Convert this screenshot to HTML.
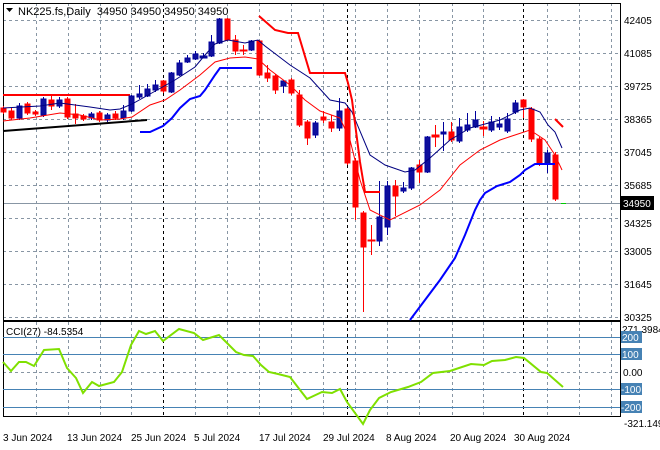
<!DOCTYPE html>
<html><head><meta charset="utf-8"><style>
html,body{margin:0;padding:0;background:#fff;width:660px;height:450px;overflow:hidden}
svg{display:block}
text{font-family:"Liberation Sans",sans-serif;font-size:10px;fill:#000}
</style></head><body>
<svg width="660" height="450" viewBox="0 0 660 450" xmlns="http://www.w3.org/2000/svg">
<rect width="660" height="450" fill="#fff"/>
<!-- grid main -->
<g stroke="#8896a4" stroke-width="1" stroke-dasharray="3,3" fill="none">
<path d="M3 20.5H620M3 53.5H620M3 86.5H620M3 119.5H620M3 152.5H620M3 185.5H620M3 218.5H620M3 251.5H620M3 284.5H620M3 317.5H620"/>
<path d="M36.5 3V320M68.5 3V320M100.5 3V320M131.5 3V320M195.5 3V320M227.5 3V320M259.5 3V320M291.5 3V320M323.5 3V320M355.5 3V320M387.5 3V320M419.5 3V320M452.5 3V320M483.5 3V320M547.5 3V320M579.5 3V320M611.5 3V320"/>
<path d="M36.5 322V416M68.5 322V416M100.5 322V416M131.5 322V416M195.5 322V416M227.5 322V416M259.5 322V416M291.5 322V416M323.5 322V416M355.5 322V416M387.5 322V416M419.5 322V416M452.5 322V416M483.5 322V416M547.5 322V416M579.5 322V416M611.5 322V416"/>
<path d="M3 372.5H620"/>
</g>
<g stroke="#000" stroke-width="1" stroke-dasharray="3,3">
<path d="M163.5 3V320M347.5 3V320M523.5 3V320M163.5 322V416M347.5 322V416M523.5 322V416"/>
</g>
<line x1="3" y1="203.5" x2="620" y2="203.5" stroke="#8896a4"/>
<!-- frames -->
<rect x="3.5" y="3.5" width="617" height="317" fill="none" stroke="#000"/>
<rect x="3.5" y="321.5" width="617" height="95" fill="none" stroke="#000"/>
<!-- left red level & trendline -->
<line x1="3" y1="95" x2="130" y2="95" stroke="#f00" stroke-width="2"/>
<line x1="3" y1="131" x2="147" y2="120" stroke="#000" stroke-width="2"/>
<!-- candles -->
<g stroke-width="1">
<g stroke="#f00" fill="#f00">
<path d="M3.5 106V114M11.5 108V120M27.5 102V115M35.5 110V116M51.5 96V110M67.5 97V119M75.5 104V124M83.5 114V121M99.5 111V122M115.5 111V120M163.5 80V93M227.5 18V41M235.5 35V55M243.5 45V55M259.5 40V76M267.5 65V82M275.5 74V94M291.5 78V95M299.5 90V127M307.5 120V145M323.5 111V123M331.5 115V132M347.5 107V165M355.5 158V220M363.5 211V312M371.5 225V255M395.5 180V216M419.5 160V183M435.5 125V147M451.5 122V142M483.5 121V136M523.5 99V118M531.5 107V142M539.5 137V166M555.5 152V201"/>
<rect x="1" y="108" width="5" height="4"/><rect x="9" y="111" width="5" height="7"/><rect x="25" y="104" width="5" height="9"/><rect x="33" y="112" width="5" height="2"/><rect x="49" y="100" width="5" height="6"/><rect x="65" y="99" width="5" height="18"/><rect x="73" y="114" width="5" height="4"/><rect x="81" y="116" width="5" height="3"/><rect x="97" y="113" width="5" height="7"/><rect x="113" y="114" width="5" height="4"/><rect x="161" y="81" width="5" height="10"/><rect x="225" y="19" width="5" height="21"/><rect x="233" y="40" width="5" height="11"/><rect x="240" y="50" width="7" height="1"/><rect x="257" y="41" width="5" height="34"/><rect x="265" y="73" width="5" height="5"/><rect x="273" y="76" width="5" height="14"/><rect x="289" y="80" width="5" height="13"/><rect x="297" y="95" width="5" height="30"/><rect x="305" y="122" width="5" height="16"/><rect x="321" y="117" width="5" height="3"/><rect x="329" y="122" width="5" height="6"/><rect x="345" y="109" width="5" height="54"/><rect x="353" y="161" width="5" height="46"/><rect x="361" y="213" width="5" height="34"/><rect x="368" y="240" width="7" height="1"/><rect x="393" y="186" width="5" height="10"/><rect x="417" y="165" width="5" height="7"/><rect x="432" y="135" width="7" height="2"/><rect x="449" y="132" width="5" height="8"/><rect x="480" y="127" width="7" height="2"/><rect x="521" y="100" width="5" height="7"/><rect x="529" y="109" width="5" height="30"/><rect x="537" y="139" width="5" height="25"/><rect x="553" y="155" width="5" height="44"/>
</g>
<g stroke="#00009c" fill="#0f0f9c">
<path d="M19.5 103V120M43.5 97V117M59.5 97V108M91.5 112V120M107.5 113V122M123.5 105V120M131.5 95V112M139.5 85V99M147.5 84V97M155.5 80V92M171.5 72V93M179.5 60V76M187.5 55V63M195.5 51V60M203.5 53V58M211.5 35V57M219.5 18V44M251.5 40V51M283.5 80V93M315.5 121V138M339.5 98V131M379.5 181V246M387.5 181V235M403.5 182V193M411.5 167V190M427.5 136V173M443.5 122V151M459.5 118V143M467.5 113V132M475.5 111V128M491.5 116V132M499.5 117V130M507.5 113V133M515.5 100V114M547.5 150V173"/>
<rect x="17" y="106" width="5" height="12"/><rect x="41" y="99" width="5" height="16"/><rect x="57" y="100" width="5" height="6"/><rect x="89" y="114" width="5" height="4"/><rect x="105" y="115" width="5" height="5"/><rect x="121" y="111" width="5" height="7"/><rect x="129" y="96" width="5" height="15"/><rect x="137" y="94" width="5" height="3"/><rect x="145" y="89" width="5" height="7"/><rect x="153" y="85" width="5" height="5"/><rect x="169" y="73" width="5" height="19"/><rect x="177" y="63" width="5" height="12"/><rect x="185" y="58" width="5" height="4"/><rect x="193" y="54" width="5" height="5"/><rect x="200" y="56" width="7" height="2"/><rect x="209" y="42" width="5" height="14"/><rect x="217" y="19" width="5" height="24"/><rect x="249" y="41" width="5" height="9"/><rect x="281" y="81" width="5" height="5"/><rect x="313" y="123" width="5" height="12"/><rect x="337" y="111" width="5" height="17"/><rect x="377" y="217" width="5" height="24"/><rect x="385" y="186" width="5" height="41"/><rect x="401" y="188" width="5" height="3"/><rect x="409" y="168" width="5" height="20"/><rect x="425" y="137" width="5" height="35"/><rect x="441" y="132" width="5" height="2"/><rect x="457" y="127" width="5" height="14"/><rect x="465" y="125" width="5" height="5"/><rect x="473" y="120" width="5" height="7"/><rect x="489" y="122" width="5" height="8"/><rect x="497" y="124" width="5" height="3"/><rect x="505" y="119" width="5" height="12"/><rect x="513" y="103" width="5" height="9"/><rect x="545" y="153" width="5" height="11"/>
</g>
</g>
<!-- MAs -->
<polyline fill="none" stroke="#000080" stroke-width="1" points="3,108 40,106 60,103 90,107 110,110 120,109 132,104 150,94 175,80 195,67 205,55 215,44 228,40 245,43 258,40 265,46 290,65 310,78 330,100 345,103 352,112 370,155 385,165 405,172 415,170 430,158 450,140 470,128 500,120 520,110 530,108 540,112 548,125 555,132 562,148"/>
<polyline fill="none" stroke="#f00" stroke-width="1" points="3,121 30,118 60,113 80,115 100,120 120,119 132,117 150,105 165,100 180,90 200,75 215,62 230,58 245,57 258,59 270,70 290,85 305,100 320,111 340,118 350,140 360,180 370,210 390,220 420,205 440,190 460,165 480,150 500,140 530,130 545,140 555,155 562,170"/>
<polyline fill="none" stroke="#0000ff" stroke-width="2" points="140,132 150,132 163,126 172,118 180,108 190,99 200,96 205,90 215,75 220,68 252,68"/>
<polyline fill="none" stroke="#0000ff" stroke-width="2" points="410,320 425,300 440,280 455,258 465,235 475,210 480,200 485,193 497,186 510,182 520,175 525,170 535,164 555,164"/>
<polyline fill="none" stroke="#f00" stroke-width="2" points="259,16 275,30 288,33 298,33 310,73 345,73 348,83 352,100 360,162 365,192 380,192"/>
<line x1="555" y1="119" x2="563" y2="127" stroke="#f00" stroke-width="2"/>
<line x1="561" y1="203.5" x2="566" y2="203.5" stroke="#0c0"/>
<!-- CCI levels -->
<g stroke="#4682b4" stroke-width="1">
<path d="M3 337.5H620M3 354.5H620M3 389.5H620M3 407.5H620"/>
</g>
<polyline fill="none" stroke="#7fe000" stroke-width="2" points="3,362 11,371 19,362 26,362 34,366 44,350 59,349 67,368 76,378 83,393 92,382 99,386 114,382 122,372 131,345 139,331 146,334 155,331 163,341 179,329 194,333 203,340 219,335 236,352 244,355 253,356 261,365 269,372 278,374 290,377 307,399 322,392 332,393 340,389 347,402 363,424 370,410 379,398 391,392 408,387 421,382 433,373 450,371 471,364 484,365 492,361 505,360 516,357 524,358 541,372 547,373 563,387"/>
<!-- title -->
<path d="M6 8h7l-3.5 4z" fill="#000"/>
<text x="18" y="15" style="font-size:11px">NK225.fs,Daily&#160; 34950 34950 34950 34950</text>
<text x="6" y="335">CCI(27) -84.5354</text>
<!-- right axis labels -->
<g>
<text x="624" y="24">42405</text><text x="624" y="57">41085</text><text x="624" y="90">39725</text><text x="624" y="123">38365</text><text x="624" y="156">37045</text><text x="624" y="189">35685</text><text x="624" y="227">34325</text><text x="624" y="255">33005</text><text x="624" y="288">31645</text><text x="624" y="321">30325</text>
</g>
<rect x="620" y="196" width="34" height="14" fill="#000"/>
<text x="623" y="207" style="fill:#fff">34950</text>
<text x="622" y="333">271.3984</text>
<rect x="621" y="331" width="21" height="12" fill="#4682b4"/><text x="622" y="341" style="fill:#fff">200</text>
<rect x="621" y="348" width="21" height="12" fill="#4682b4"/><text x="622" y="358" style="fill:#fff">100</text>
<text x="623" y="376">0.00</text>
<rect x="621" y="383" width="21" height="12" fill="#4682b4"/><text x="621" y="393" style="fill:#fff">-100</text>
<rect x="621" y="401" width="21" height="12" fill="#4682b4"/><text x="621" y="411" style="fill:#fff">-200</text>
<text x="624" y="427">-321.149</text>
<!-- dates -->
<g>
<text x="3" y="441">3 Jun 2024</text><text x="67" y="441">13 Jun 2024</text><text x="131" y="441">25 Jun 2024</text><text x="194" y="441">5 Jul 2024</text><text x="259" y="441">17 Jul 2024</text><text x="323" y="441">29 Jul 2024</text><text x="386" y="441">8 Aug 2024</text><text x="450" y="441">20 Aug 2024</text><text x="514" y="441">30 Aug 2024</text>
</g>
</svg>
</body></html>
